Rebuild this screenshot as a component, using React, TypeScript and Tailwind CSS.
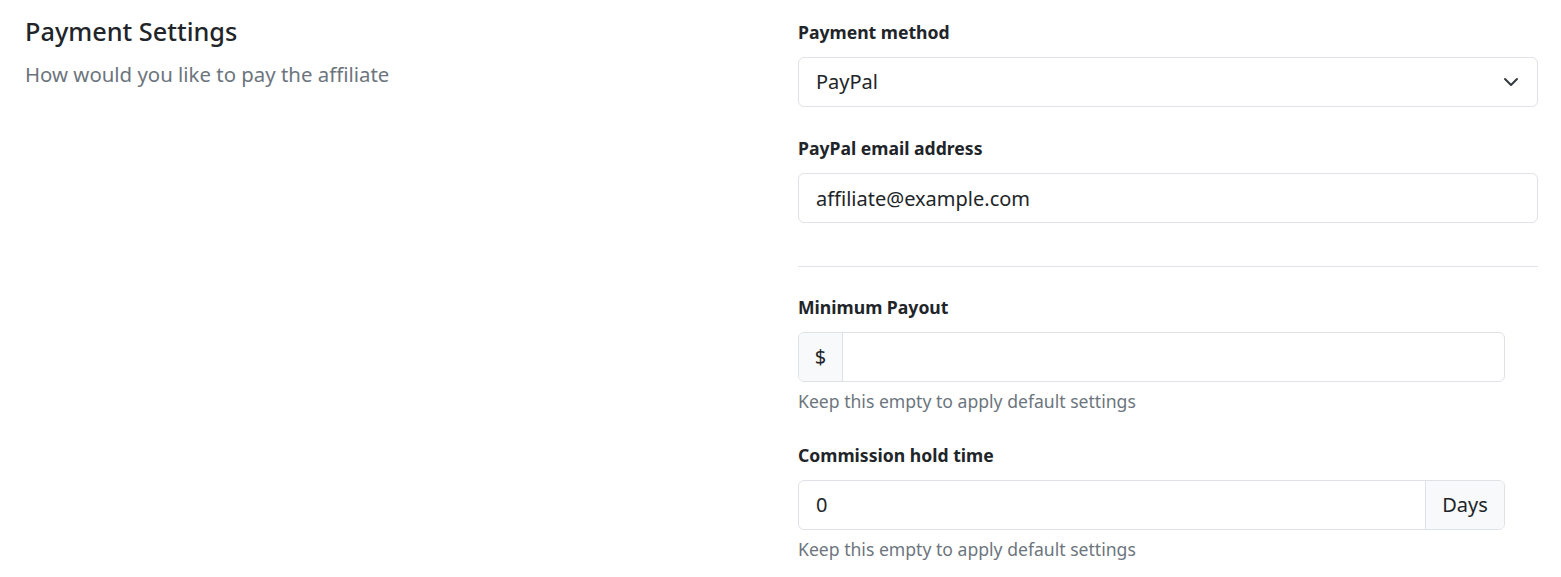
import React from "react";

const font = { fontFamily: '"Noto Sans", "Open Sans", sans-serif' };

function Label({ children }: { children: React.ReactNode }) {
  return (
    <label className="block text-[17.6px] leading-6 font-bold text-[#212529] mb-[13px]">
      {children}
    </label>
  );
}

function Help({ children }: { children: React.ReactNode }) {
  return <p className="mt-[7px] text-[17.6px] leading-6 text-[#6c757d]">{children}</p>;
}

export default function App() {
  return (
    <div className="min-h-screen bg-white" style={font}>
      <div className="flex pl-[25px] pr-[23px] pt-[17px]">
        <div className="flex-1">
          <h2 className="text-[25.3px] leading-[29px] font-medium text-[#212529]">
            Payment Settings
          </h2>
          <p className="mt-[13px] text-[20.4px] leading-[30px] text-[#6c757d]">
            How would you like to pay the affiliate
          </p>
        </div>

        <div className="w-[740px] pt-[3px]">
          <div>
            <Label>Payment method</Label>
            <div className="relative">
              <select
                defaultValue="paypal"
                className="block w-full h-[50px] appearance-none rounded-[6px] border border-[#dee2e6] bg-white pl-[17px] pr-12 text-[20px] text-[#212529] outline-none"
              >
                <option value="paypal">PayPal</option>
                <option value="bank">Bank transfer</option>
              </select>
              <svg
                className="pointer-events-none absolute right-[19px] top-[19px]"
                width="16"
                height="12"
                viewBox="0 0 16 12"
                fill="none"
              >
                <path
                  d="m2 3 6 6 6-6"
                  stroke="#343a40"
                  strokeWidth="2"
                  strokeLinecap="round"
                  strokeLinejoin="round"
                />
              </svg>
            </div>
          </div>

          <div className="mt-[29px]">
            <Label>PayPal email address</Label>
            <input
              type="email"
              defaultValue="affiliate@example.com"
              className="block w-full h-[50px] rounded-[6px] border border-[#dee2e6] bg-white px-[17px] text-[20px] text-[#212529] outline-none"
            />
          </div>

          <hr className="mt-[43px] mb-0 border-t border-[#dee2e6]" />

          <div className="mt-[28px] w-[707px]">
            <Label>Minimum Payout</Label>
            <div className="flex h-[50px] rounded-[6px] border border-[#dee2e6] overflow-hidden">
              <span className="flex w-[44px] items-center justify-center border-r border-[#dee2e6] bg-[#f8f9fa] text-[20px] text-[#212529]">
                $
              </span>
              <input
                type="text"
                className="flex-1 min-w-0 px-[17px] text-[20px] text-[#212529] outline-none"
              />
            </div>
            <Help>Keep this empty to apply default settings</Help>
          </div>

          <div className="mt-[30px] w-[707px]">
            <Label>Commission hold time</Label>
            <div className="flex h-[50px] rounded-[6px] border border-[#dee2e6] overflow-hidden">
              <input
                type="text"
                defaultValue="0"
                className="flex-1 min-w-0 px-[17px] text-[20px] text-[#212529] outline-none"
              />
              <span className="flex w-[79px] items-center justify-center border-l border-[#dee2e6] bg-[#f8f9fa] text-[20px] text-[#212529]">
                Days
              </span>
            </div>
            <Help>Keep this empty to apply default settings</Help>
          </div>
        </div>
      </div>
    </div>
  );
}
